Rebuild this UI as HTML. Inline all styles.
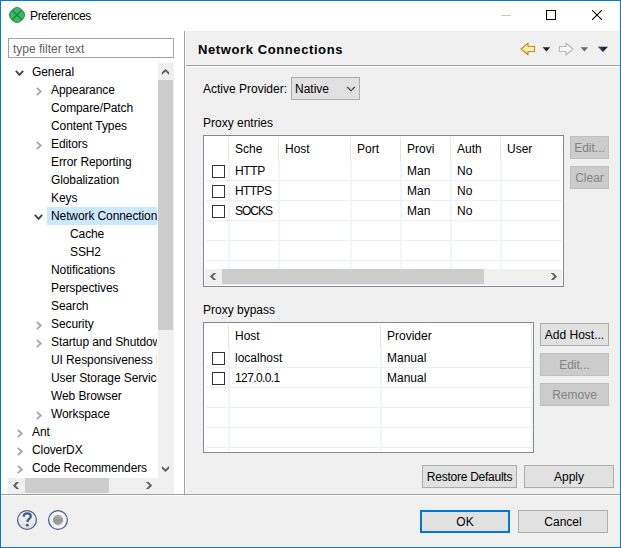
<!DOCTYPE html>
<html><head><meta charset="utf-8">
<style>
*{margin:0;padding:0;box-sizing:border-box}
html,body{width:621px;height:548px;overflow:hidden;background:#f0f0f0}
body{position:relative;font-family:"Liberation Sans",sans-serif;font-size:12px;color:#000}
.a{position:absolute}
.t{position:absolute;white-space:nowrap;line-height:14px;font-size:12px}
.btn{position:absolute;background:#e1e1e1;border:1px solid #adadad;text-align:center;line-height:21px;padding-top:1px;font-size:12px;color:#000;white-space:nowrap}
.dis{background:#cccccc;border-color:#bfbfbf;color:#838383}
.cb{position:absolute;width:13px;height:13px;border:1px solid #333;background:#fff}
.hl{position:absolute;height:1px;background:#f0f0f0}
.vl{position:absolute;width:1px;background:#f0f0f0}
.hs{position:absolute;width:1px;background:#e5e5e5}
</style></head><body>
<!-- window frame -->
<div class="a" style="left:0;top:0;width:621px;height:548px;border:1px solid #0b78d5"></div>
<!-- title bar + left white area -->
<div class="a" style="left:1px;top:1px;width:619px;height:30px;background:#fff"></div>
<div class="a" style="left:1px;top:31px;width:184px;height:463px;background:#fff"></div>
<!-- separators -->
<div class="a" style="left:184px;top:31px;width:1px;height:463px;background:#a0a0a0"></div>
<div class="a" style="left:185px;top:31px;width:1px;height:463px;background:#fff"></div>
<div class="a" style="left:1px;top:494px;width:619px;height:1px;background:#a0a0a0"></div>
<div class="a" style="left:1px;top:495px;width:619px;height:1px;background:#fff"></div>
<div class="a" style="left:186px;top:65px;width:434px;height:1px;background:#a0a0a0"></div>
<div class="a" style="left:186px;top:66px;width:434px;height:1px;background:#fff"></div>

<!-- title -->
<svg class="a" style="left:9px;top:7px" width="16" height="16" viewBox="0 0 16 16">
<g fill="#1b8e3e"><circle cx="8" cy="5.6" r="5.6"/><circle cx="10.4" cy="8" r="5.6"/><circle cx="8" cy="10.4" r="5.6"/><circle cx="5.6" cy="8" r="5.6"/></g>
<g fill="#3db866"><circle cx="8" cy="5.6" r="4.6"/><circle cx="10.4" cy="8" r="4.6"/><circle cx="8" cy="10.4" r="4.6"/><circle cx="5.6" cy="8" r="4.6"/></g>
<path d="M3 3L13 13M13 3L3 13" stroke="#17853a" stroke-width="1.1"/>
</svg>
<div class="t" style="left:30px;top:9px;letter-spacing:-0.35px">Preferences</div>
<!-- window controls -->
<div class="a" style="left:501px;top:15px;width:10px;height:1px;background:#c8c8c8"></div>
<div class="a" style="left:546px;top:10px;width:10px;height:10px;border:1px solid #000"></div>
<svg class="a" style="left:592px;top:10px" width="10" height="10" viewBox="0 0 10 10"><path d="M0 0L10 10M10 0L0 10" stroke="#000" stroke-width="1.05"/></svg>

<!-- filter -->
<div class="a" style="left:8px;top:38px;width:166px;height:20px;border:1px solid #a0a0a8;background:#fff"></div>
<div class="t" style="left:13px;top:42px;color:#5f5f5f">type filter text</div>

<!-- tree -->
<div id="tree" class="a" style="left:8px;top:63px;width:149px;height:415px;overflow:hidden;background:#fff">
<svg class="a" style="left:7px;top:7px" width="10" height="7" viewBox="0 0 10 7"><path d="M0.8 0.8L4.5 4.8L8.2 0.8" fill="none" stroke="#404040" stroke-width="1.8"/></svg>
<div class="a" style="left:24px;top:0px;line-height:18px;white-space:nowrap;letter-spacing:-0.1px">General</div>
<svg class="a" style="left:28px;top:24px" width="7" height="9" viewBox="0 0 7 9"><path d="M0.8 0.8L4.8 4.5L0.8 8.2" fill="none" stroke="#a6a6a6" stroke-width="1.8"/></svg>
<div class="a" style="left:43px;top:18px;line-height:18px;white-space:nowrap;letter-spacing:-0.1px">Appearance</div>
<div class="a" style="left:43px;top:36px;line-height:18px;white-space:nowrap;letter-spacing:-0.1px">Compare/Patch</div>
<div class="a" style="left:43px;top:54px;line-height:18px;white-space:nowrap;letter-spacing:-0.1px">Content Types</div>
<svg class="a" style="left:28px;top:78px" width="7" height="9" viewBox="0 0 7 9"><path d="M0.8 0.8L4.8 4.5L0.8 8.2" fill="none" stroke="#a6a6a6" stroke-width="1.8"/></svg>
<div class="a" style="left:43px;top:72px;line-height:18px;white-space:nowrap;letter-spacing:-0.1px">Editors</div>
<div class="a" style="left:43px;top:90px;line-height:18px;white-space:nowrap;letter-spacing:-0.1px">Error Reporting</div>
<div class="a" style="left:43px;top:108px;line-height:18px;white-space:nowrap;letter-spacing:-0.1px">Globalization</div>
<div class="a" style="left:43px;top:126px;line-height:18px;white-space:nowrap;letter-spacing:-0.1px">Keys</div>
<div class="a" style="left:39px;top:144px;width:111px;height:18px;background:#cce8ff"></div>
<svg class="a" style="left:26px;top:151px" width="10" height="7" viewBox="0 0 10 7"><path d="M0.8 0.8L4.5 4.8L8.2 0.8" fill="none" stroke="#404040" stroke-width="1.8"/></svg>
<div class="a" style="left:43px;top:144px;line-height:18px;white-space:nowrap;letter-spacing:-0.1px">Network Connections</div>
<div class="a" style="left:62px;top:162px;line-height:18px;white-space:nowrap;letter-spacing:-0.1px">Cache</div>
<div class="a" style="left:62px;top:180px;line-height:18px;white-space:nowrap;letter-spacing:-0.1px">SSH2</div>
<div class="a" style="left:43px;top:198px;line-height:18px;white-space:nowrap;letter-spacing:-0.1px">Notifications</div>
<div class="a" style="left:43px;top:216px;line-height:18px;white-space:nowrap;letter-spacing:-0.1px">Perspectives</div>
<div class="a" style="left:43px;top:234px;line-height:18px;white-space:nowrap;letter-spacing:-0.1px">Search</div>
<svg class="a" style="left:28px;top:258px" width="7" height="9" viewBox="0 0 7 9"><path d="M0.8 0.8L4.8 4.5L0.8 8.2" fill="none" stroke="#a6a6a6" stroke-width="1.8"/></svg>
<div class="a" style="left:43px;top:252px;line-height:18px;white-space:nowrap;letter-spacing:-0.1px">Security</div>
<svg class="a" style="left:28px;top:276px" width="7" height="9" viewBox="0 0 7 9"><path d="M0.8 0.8L4.8 4.5L0.8 8.2" fill="none" stroke="#a6a6a6" stroke-width="1.8"/></svg>
<div class="a" style="left:43px;top:270px;line-height:18px;white-space:nowrap;letter-spacing:-0.1px">Startup and Shutdown</div>
<div class="a" style="left:43px;top:288px;line-height:18px;white-space:nowrap;letter-spacing:-0.1px">UI Responsiveness Monitoring</div>
<div class="a" style="left:43px;top:306px;line-height:18px;white-space:nowrap;letter-spacing:-0.1px">User Storage Service</div>
<div class="a" style="left:43px;top:324px;line-height:18px;white-space:nowrap;letter-spacing:-0.1px">Web Browser</div>
<svg class="a" style="left:28px;top:348px" width="7" height="9" viewBox="0 0 7 9"><path d="M0.8 0.8L4.8 4.5L0.8 8.2" fill="none" stroke="#a6a6a6" stroke-width="1.8"/></svg>
<div class="a" style="left:43px;top:342px;line-height:18px;white-space:nowrap;letter-spacing:-0.1px">Workspace</div>
<svg class="a" style="left:9px;top:366px" width="7" height="9" viewBox="0 0 7 9"><path d="M0.8 0.8L4.8 4.5L0.8 8.2" fill="none" stroke="#a6a6a6" stroke-width="1.8"/></svg>
<div class="a" style="left:24px;top:360px;line-height:18px;white-space:nowrap;letter-spacing:-0.1px">Ant</div>
<svg class="a" style="left:9px;top:384px" width="7" height="9" viewBox="0 0 7 9"><path d="M0.8 0.8L4.8 4.5L0.8 8.2" fill="none" stroke="#a6a6a6" stroke-width="1.8"/></svg>
<div class="a" style="left:24px;top:378px;line-height:18px;white-space:nowrap;letter-spacing:-0.1px">CloverDX</div>
<svg class="a" style="left:9px;top:402px" width="7" height="9" viewBox="0 0 7 9"><path d="M0.8 0.8L4.8 4.5L0.8 8.2" fill="none" stroke="#a6a6a6" stroke-width="1.8"/></svg>
<div class="a" style="left:24px;top:396px;line-height:18px;white-space:nowrap;letter-spacing:-0.1px">Code Recommenders</div>
</div>
<!-- vertical scrollbar -->
<div class="a" style="left:158px;top:63px;width:16px;height:431px;background:#f0f0f0"></div>
<div class="a" style="left:158px;top:80px;width:15px;height:250px;background:#cdcdcd"></div>
<!-- horizontal scrollbar -->
<div class="a" style="left:8px;top:478px;width:150px;height:16px;background:#f0f0f0"></div>
<div class="a" style="left:25px;top:478px;width:84px;height:15px;background:#cdcdcd"></div>

<!-- right panel -->
<div class="a" style="left:198px;top:42px;font-weight:bold;font-size:13px;line-height:15px;letter-spacing:0.6px;white-space:nowrap;color:#000">Network Connections</div>

<div class="t" style="left:203px;top:82px">Active Provider:</div>
<div class="a" style="left:291px;top:77px;width:69px;height:23px;background:#e1e1e1;border:1px solid #adadad"></div>
<div class="t" style="left:295px;top:82px">Native</div>

<div class="t" style="left:203px;top:116px">Proxy entries</div>
<div id="t1" class="a" style="left:203px;top:135px;width:361px;height:152px;border:1px solid #828790;background:#fff"></div>
<div class="a" style="left:228px;top:137px;width:1px;height:24px;background:#e5e5e5"></div>
<div class="a" style="left:228px;top:161px;width:2px;height:108px;background:#eef5fd"></div>
<div class="a" style="left:278px;top:137px;width:1px;height:24px;background:#e5e5e5"></div>
<div class="a" style="left:278px;top:161px;width:2px;height:108px;background:#eef5fd"></div>
<div class="a" style="left:350px;top:137px;width:1px;height:24px;background:#e5e5e5"></div>
<div class="a" style="left:350px;top:161px;width:2px;height:108px;background:#eef5fd"></div>
<div class="a" style="left:400px;top:137px;width:1px;height:24px;background:#e5e5e5"></div>
<div class="a" style="left:400px;top:161px;width:2px;height:108px;background:#eef5fd"></div>
<div class="a" style="left:450px;top:137px;width:1px;height:24px;background:#e5e5e5"></div>
<div class="a" style="left:450px;top:161px;width:2px;height:108px;background:#eef5fd"></div>
<div class="a" style="left:500px;top:137px;width:1px;height:24px;background:#e5e5e5"></div>
<div class="a" style="left:500px;top:161px;width:2px;height:108px;background:#eef5fd"></div>
<div class="a" style="left:205px;top:180px;width:357px;height:1px;background:#f0f0f0"></div>
<div class="a" style="left:205px;top:200px;width:357px;height:1px;background:#f0f0f0"></div>
<div class="a" style="left:205px;top:220px;width:357px;height:1px;background:#f0f0f0"></div>
<div class="a" style="left:205px;top:240px;width:357px;height:1px;background:#f0f0f0"></div>
<div class="a" style="left:205px;top:260px;width:357px;height:1px;background:#f0f0f0"></div>
<div class="t" style="left:235px;top:142px">Sche</div>
<div class="t" style="left:285px;top:142px">Host</div>
<div class="t" style="left:357px;top:142px">Port</div>
<div class="t" style="left:407px;top:142px">Provi</div>
<div class="t" style="left:457px;top:142px">Auth</div>
<div class="t" style="left:507px;top:142px">User</div>
<div class="cb" style="left:212px;top:165px"></div>
<div class="t" style="left:235px;top:164px;letter-spacing:-0.4px">HTTP</div>
<div class="t" style="left:407px;top:164px">Man</div>
<div class="t" style="left:457px;top:164px">No</div>
<div class="cb" style="left:212px;top:185px"></div>
<div class="t" style="left:235px;top:184px;letter-spacing:-0.6px">HTTPS</div>
<div class="t" style="left:407px;top:184px">Man</div>
<div class="t" style="left:457px;top:184px">No</div>
<div class="cb" style="left:212px;top:205px"></div>
<div class="t" style="left:235px;top:204px;letter-spacing:-1px">SOCKS</div>
<div class="t" style="left:407px;top:204px">Man</div>
<div class="t" style="left:457px;top:204px">No</div>
<div class="a" style="left:205px;top:269px;width:357px;height:16px;background:#f0f0f0"></div>
<div class="a" style="left:222px;top:269px;width:262px;height:15px;background:#cdcdcd"></div>

<div class="btn dis" style="left:570px;top:136px;width:39px;height:23px">Edit...</div>
<div class="btn dis" style="left:570px;top:166px;width:39px;height:23px">Clear</div>

<div class="t" style="left:203px;top:303px">Proxy bypass</div>
<div id="t2" class="a" style="left:203px;top:322px;width:331px;height:131px;border:1px solid #828790;background:#fff"></div>
<div class="a" style="left:228px;top:324px;width:1px;height:24px;background:#e5e5e5"></div>
<div class="a" style="left:228px;top:348px;width:2px;height:103px;background:#eef5fd"></div>
<div class="a" style="left:380px;top:324px;width:1px;height:24px;background:#e5e5e5"></div>
<div class="a" style="left:380px;top:348px;width:2px;height:103px;background:#eef5fd"></div>
<div class="a" style="left:531px;top:324px;width:1px;height:24px;background:#e5e5e5"></div>
<div class="a" style="left:531px;top:348px;width:2px;height:103px;background:#eef5fd"></div>
<div class="a" style="left:205px;top:367px;width:327px;height:1px;background:#f0f0f0"></div>
<div class="a" style="left:205px;top:387px;width:327px;height:1px;background:#f0f0f0"></div>
<div class="a" style="left:205px;top:407px;width:327px;height:1px;background:#f0f0f0"></div>
<div class="a" style="left:205px;top:427px;width:327px;height:1px;background:#f0f0f0"></div>
<div class="a" style="left:205px;top:447px;width:327px;height:1px;background:#f0f0f0"></div>
<div class="t" style="left:235px;top:329px">Host</div>
<div class="t" style="left:387px;top:329px">Provider</div>
<div class="cb" style="left:212px;top:352px"></div>
<div class="t" style="left:235px;top:351px">localhost</div>
<div class="t" style="left:387px;top:351px">Manual</div>
<div class="cb" style="left:212px;top:372px"></div>
<div class="t" style="left:235px;top:371px;letter-spacing:-0.6px">127.0.0.1</div>
<div class="t" style="left:387px;top:371px">Manual</div>

<div class="btn" style="left:540px;top:323px;width:69px;height:23px">Add Host...</div>
<div class="btn dis" style="left:540px;top:353px;width:69px;height:23px">Edit...</div>
<div class="btn dis" style="left:540px;top:383px;width:69px;height:23px">Remove</div>

<div class="btn" style="left:422px;top:465px;width:95px;height:23px"><span style="letter-spacing:-0.25px">Restore Defaults</span></div>
<div class="btn" style="left:524px;top:465px;width:90px;height:23px">Apply</div>

<div class="btn" style="left:420px;top:510px;width:90px;height:23px;border:2px solid #0078d7;line-height:19px">OK</div>
<div class="btn" style="left:518px;top:510px;width:90px;height:23px">Cancel</div>


<!-- scrollbar arrows -->
<svg class="a" style="left:0;top:0" width="621" height="548" viewBox="0 0 621 548"><g fill="#5d5d5d"><polygon points="19.1,482.0 16.400000000000002,482.0 12.9,485.5 16.400000000000002,489.0 19.1,489.0 15.600000000000001,485.5"/><polygon points="145.9,482.0 148.6,482.0 152.2,485.5 148.6,489.0 145.9,489.0 149.5,485.5"/><polygon points="216.3,273.0 213.60000000000002,273.0 209.9,276.5 213.60000000000002,280.0 216.3,280.0 212.6,276.5"/><polygon points="550.8,273.0 553.5,273.0 557.1,276.5 553.5,280.0 550.8,280.0 554.4,276.5"/><polygon points="161.9,75.0 161.9,72.3 165.5,68.9 169.1,72.3 169.1,75.0 165.5,71.60000000000001"/><polygon points="161.9,465.9 161.9,468.59999999999997 165.5,471.9 169.1,468.59999999999997 169.1,465.9 165.5,469.2"/></g></svg>
<!-- combo chevron -->
<svg class="a" style="left:346px;top:86px" width="10" height="6" viewBox="0 0 10 6"><path d="M1.2 1L5 4.8L8.8 1" fill="none" stroke="#333" stroke-width="1.1"/></svg>
<!-- toolbar -->
<svg class="a" style="left:518px;top:40px" width="20" height="18" viewBox="0 0 20 18">
<defs><linearGradient id="gy" x1="0" y1="0" x2="0" y2="1"><stop offset="0" stop-color="#fffdea"/><stop offset="1" stop-color="#ffdf88"/></linearGradient></defs>
<path d="M3 9L10 3.2V6.5H16.5V11.5H10V14.8Z" fill="url(#gy)" stroke="#c88a18" stroke-width="1.2" stroke-linejoin="round"/></svg>
<svg class="a" style="left:542px;top:47px" width="9" height="5" viewBox="0 0 9 5"><path d="M0.6 0.3H8.2L4.4 4.4Z" fill="#1e1e1e"/></svg>
<svg class="a" style="left:556px;top:40px" width="20" height="18" viewBox="0 0 20 18">
<path d="M17 9L10 3.2V6.5H3.5V11.5H10V14.8Z" fill="#f7f7f7" stroke="#b8b8b8" stroke-width="1.2" stroke-linejoin="round"/></svg>
<svg class="a" style="left:580px;top:47px" width="9" height="5" viewBox="0 0 9 5"><path d="M0.6 0.3H8.2L4.4 4.4Z" fill="#6a6a6a"/></svg>
<svg class="a" style="left:597px;top:46px" width="12" height="7" viewBox="0 0 12 7"><path d="M1 0.7H11L6 6Z" fill="#2b2140"/><path d="M1 0.7H4L6 6Z" fill="#6a45b5" opacity="0.6"/></svg>
<!-- help icons -->
<svg class="a" style="left:15px;top:508px" width="24" height="24" viewBox="0 0 24 24">
<defs><linearGradient id="gh" x1="0" y1="0" x2="0" y2="1"><stop offset="0" stop-color="#fbfbfb"/><stop offset="1" stop-color="#dedede"/></linearGradient>
<linearGradient id="gg" x1="0" y1="0" x2="0" y2="1"><stop offset="0" stop-color="#b0b0b0"/><stop offset="0.55" stop-color="#959595"/><stop offset="1" stop-color="#a6a6a6"/></linearGradient></defs>
<circle cx="12" cy="12" r="9.4" fill="url(#gh)" stroke="#4b5f86" stroke-width="1.25"/>
<path d="M8.6 8.6C8.8 6.2 10.3 5.3 12.2 5.3C14.3 5.3 15.8 6.5 15.8 8.3C15.8 10.3 13.4 10.9 12.6 12.6V14" fill="none" stroke="#3f5c8c" stroke-width="2.3"/>
<circle cx="12.3" cy="17.2" r="1.4" fill="#3f5c8c"/>
</svg>
<svg class="a" style="left:46px;top:508px" width="24" height="24" viewBox="0 0 24 24">
<circle cx="12" cy="12" r="9.4" fill="#f3f3f3" stroke="#4b5f86" stroke-width="1.25"/>
<circle cx="12" cy="12" r="4.7" fill="url(#gg)" stroke="#8a8a8a" stroke-width="0.6"/>
</svg>
</body></html>
